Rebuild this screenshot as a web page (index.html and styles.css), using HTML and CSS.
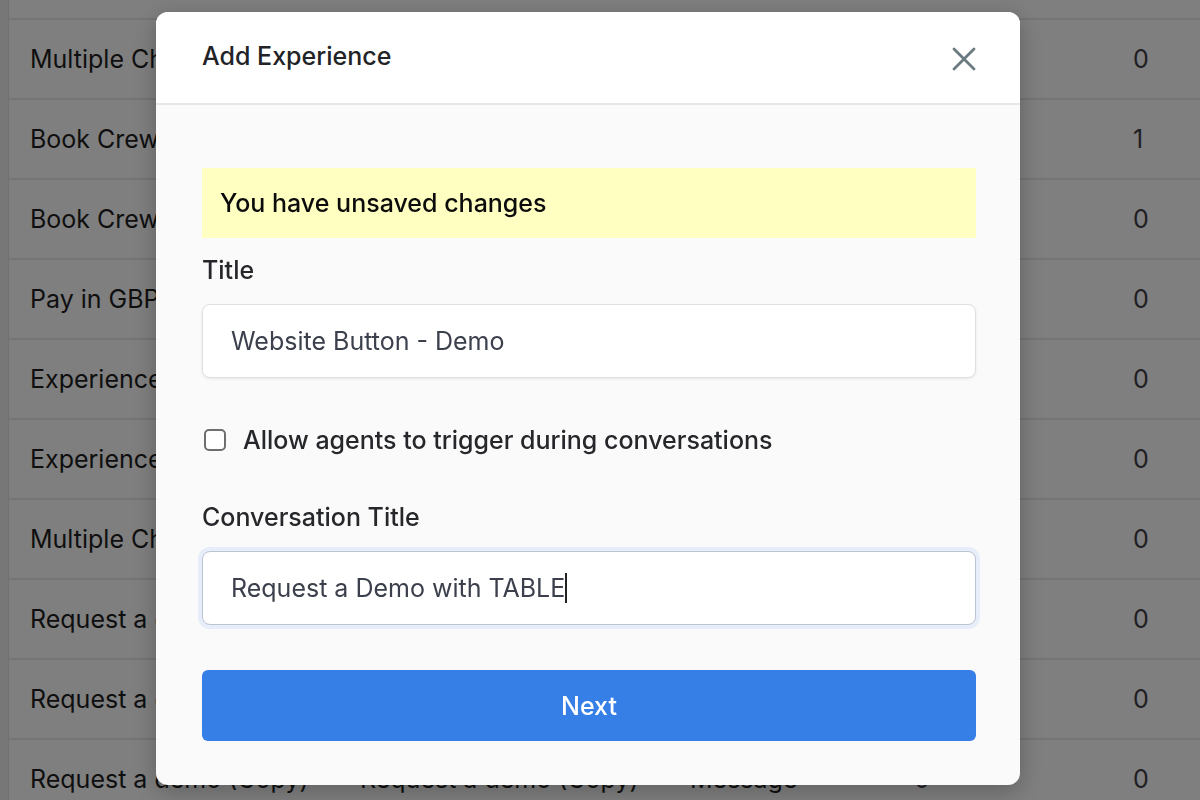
FILE: index.html
```html
<!DOCTYPE html>
<html>
<head>
<meta charset="utf-8">
<link rel="stylesheet" href="styles.css">
</head>
<body>
<div class="page">
  <div class="gutter"></div>
  <div class="table">
    <div class="row row-partial"></div>
    <div class="row"><span class="c1">Multiple Choice Demo</span><span class="c2">Multiple Choice Demo</span><span class="c3">Message</span><span class="c4">0</span><span class="c5">0</span></div>
    <div class="row"><span class="c1">Book Crew Call</span><span class="c2">Book Crew Call</span><span class="c3">Message</span><span class="c4">0</span><span class="c5">1</span></div>
    <div class="row"><span class="c1">Book Crew Demo</span><span class="c2">Book Crew Demo</span><span class="c3">Message</span><span class="c4">0</span><span class="c5">0</span></div>
    <div class="row"><span class="c1">Pay in GBP</span><span class="c2">Pay in GBP</span><span class="c3">Message</span><span class="c4">0</span><span class="c5">0</span></div>
    <div class="row"><span class="c1">Experience 1</span><span class="c2">Experience 1</span><span class="c3">Message</span><span class="c4">0</span><span class="c5">0</span></div>
    <div class="row"><span class="c1">Experience 2</span><span class="c2">Experience 2</span><span class="c3">Message</span><span class="c4">0</span><span class="c5">0</span></div>
    <div class="row"><span class="c1">Multiple Choice</span><span class="c2">Multiple Choice</span><span class="c3">Message</span><span class="c4">0</span><span class="c5">0</span></div>
    <div class="row"><span class="c1">Request a demo</span><span class="c2">Request a demo</span><span class="c3">Message</span><span class="c4">0</span><span class="c5">0</span></div>
    <div class="row"><span class="c1">Request a demo</span><span class="c2">Request a demo</span><span class="c3">Message</span><span class="c4">0</span><span class="c5">0</span></div>
    <div class="row"><span class="c1">Request a demo (Copy)</span><span class="c2">Request a demo (Copy)</span><span class="c3">Message</span><span class="c4">0</span><span class="c5">0</span></div>
  </div>
</div>

<div class="overlay">
  <div class="modal">
    <div class="modal-header">
      <h2 class="modal-title">Add Experience</h2>
      <span class="close" aria-label="Close">
        <svg width="26" height="26" viewBox="0 0 26 26"><path d="M3 3 L23 23 M23 3 L3 23" stroke="#6b7980" stroke-width="2.8" stroke-linecap="round" fill="none"/></svg>
      </span>
    </div>
    <div class="modal-body">
      <div class="notice">You have unsaved changes</div>
      <label class="label label-title">Title</label>
      <div class="input">Website Button - Demo</div>
      <div class="check-row">
        <span class="checkbox"></span>
        <span class="check-label">Allow agents to trigger during conversations</span>
      </div>
      <label class="label label-conv">Conversation Title</label>
      <div class="input input-focus">Request a Demo with TABLE<span class="caret"></span></div>
      <button class="btn-next">Next</button>
    </div>
  </div>
</div>
</body>
</html>
```

FILE: styles.css
```css
* { box-sizing: border-box; }
html, body { margin: 0; padding: 0; }
body {
  width: 1200px;
  height: 800px;
  overflow: hidden;
  font-family: Inter, "Noto Sans", "Liberation Sans", sans-serif;
  background: #ffffff;
}
.page {
  display: flex;
  height: 800px;
}
.gutter {
  width: 9px;
  background: #efefef;
  border-right: 1px solid #e2e2e2;
}
.table {
  flex: 1;
}
.row {
  height: 80px;
  display: flex;
  align-items: center;
  border-bottom: 2px solid #e8e8e8;
  font-size: 25px;
  color: #1e1e1e;
}
.row-partial { height: 20px; }
.row span { white-space: nowrap; }
.c1 { width: 351px; padding-left: 21px; }
.c2 { width: 330px; }
.c3 { width: 224px; }
.c4 { width: 219px; color: #404048; }
.c5 { color: #404048; }

.overlay {
  position: fixed;
  inset: 0;
  background: rgba(0, 0, 0, 0.5);
}
.modal {
  position: absolute;
  left: 156px;
  top: 12px;
  width: 864px;
  height: 773px;
  border-radius: 12px;
  overflow: hidden;
  background: #fafafa;
  box-shadow: 0 6px 24px rgba(0, 0, 0, 0.25);
  display: flex;
  flex-direction: column;
}
.modal-header {
  height: 93px;
  background: #ffffff;
  border-bottom: 2px solid #e6e6e6;
  display: flex;
  align-items: center;
  justify-content: space-between;
  padding: 0 43px 4px 46px;
}
.modal-title {
  margin: 0;
  font-size: 25px;
  font-weight: 500;
  color: #222326;
}
.close { display: flex; width: 26px; height: 26px; margin-top: 6px; }

.modal-body {
  padding: 63px 44px 0 46px;
  display: flex;
  flex-direction: column;
}
.notice {
  height: 70px;
  background: #ffffc2;
  display: flex;
  align-items: center;
  padding-left: 18px;
  font-size: 25px;
  font-weight: 500;
  color: #0c0c0c;
}
.label {
  font-size: 25px;
  font-weight: 500;
  color: #26272a;
  line-height: 30px;
}
.label-title { margin-top: 17px; margin-bottom: 19px; }
.label-conv { margin-top: 51px; margin-bottom: 19px; }
.input {
  height: 74px;
  flex-shrink: 0;
  background: #ffffff;
  border: 1px solid #dedfe2;
  border-radius: 8px;
  box-shadow: 0 1px 3px rgba(0, 0, 0, 0.08);
  display: flex;
  align-items: center;
  padding-left: 28px;
  font-size: 25px;
  color: #3b404c;
}
.input-focus {
  border-color: #bcc4d4;
  box-shadow: 0 0 0 4px #e7edf9, 0 1px 3px rgba(0, 0, 0, 0.1);
}
.caret {
  display: inline-block;
  width: 2px;
  height: 30px;
  background: #222;
}
.check-row {
  display: flex;
  align-items: center;
  margin-top: 51px;
  height: 22px;
}
.checkbox {
  width: 22px;
  height: 22px;
  border: 2px solid #6e6e6e;
  border-radius: 5px;
  background: #fff;
  margin-left: 2px;
}
.check-label {
  margin-left: 17px;
  font-size: 25px;
  font-weight: 500;
  color: #26272a;
}
.btn-next {
  margin-top: 45px;
  height: 71px;
  flex-shrink: 0;
  border: none;
  border-radius: 6px;
  background: #357fe7;
  color: #ffffff;
  font-family: inherit;
  font-size: 25px;
  font-weight: 500;
}
```
